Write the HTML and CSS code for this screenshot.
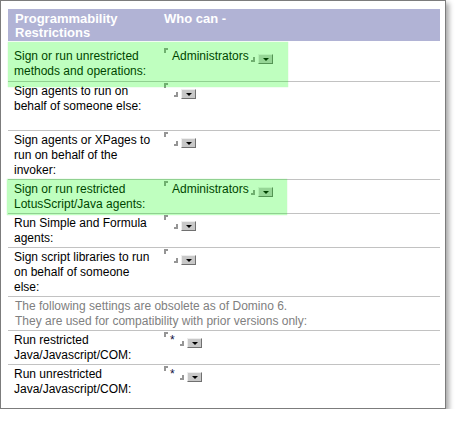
FILE: index.html
```html
<!DOCTYPE html>
<html lang="en">
<head>
    <meta charset="UTF-8">
    <title>Programmability Restrictions</title>
    <link rel="stylesheet" href="styles.css">
</head>
<body>
    <div class="panel">
        <!-- Cabeçalho -->
        <div class="row head">
            <div class="label">Programmability<br>Restrictions</div>
            <div class="value">Who can -</div>
        </div>

        <div class="row first">
            <div class="label">Sign or run unrestricted methods and operations:</div>
            <div class="value"><span class="field"><span class="fld-open"></span><span class="fld-text">Administrators</span><span class="fld-close"></span><span class="drop"></span></span></div>
        </div>

        <div class="row tall">
            <div class="label">Sign agents to run on behalf of someone else:</div>
            <div class="value"><span class="field"><span class="fld-open"></span><span class="fld-text"></span><span class="fld-close"></span><span class="drop"></span></span></div>
        </div>

        <div class="row">
            <div class="label">Sign agents or XPages to run on behalf of the invoker:</div>
            <div class="value"><span class="field"><span class="fld-open"></span><span class="fld-text"></span><span class="fld-close"></span><span class="drop"></span></span></div>
        </div>

        <div class="row">
            <div class="label">Sign or run restricted LotusScript/Java agents:</div>
            <div class="value"><span class="field"><span class="fld-open"></span><span class="fld-text">Administrators</span><span class="fld-close"></span><span class="drop"></span></span></div>
        </div>

        <div class="row">
            <div class="label">Run Simple and Formula agents:</div>
            <div class="value"><span class="field"><span class="fld-open"></span><span class="fld-text"></span><span class="fld-close"></span><span class="drop"></span></span></div>
        </div>

        <div class="row">
            <div class="label">Sign script libraries to run on behalf of someone else:</div>
            <div class="value"><span class="field"><span class="fld-open"></span><span class="fld-text"></span><span class="fld-close"></span><span class="drop"></span></span></div>
        </div>

        <div class="row note">
            The following settings are obsolete as of Domino 6.<br>
            They are used for compatibility with prior versions only:
        </div>

        <div class="row">
            <div class="label">Run restricted Java/Javascript/COM:</div>
            <div class="value"><span class="field"><span class="fld-open"></span><span class="fld-text star">*</span><span class="fld-close"></span><span class="drop"></span></span></div>
        </div>

        <div class="row last">
            <div class="label">Run unrestricted Java/Javascript/COM:</div>
            <div class="value"><span class="field"><span class="fld-open"></span><span class="fld-text star">*</span><span class="fld-close"></span><span class="drop"></span></span></div>
        </div>

        <!-- Destaques verdes -->
        <div class="mark mark-1"></div>
        <div class="mark mark-2"></div>
    </div>
</body>
</html>
```

FILE: styles.css
```css
/* Reset */
* {
    margin: 0;
    padding: 0;
    box-sizing: border-box;
}

body {
    background: #fff;
    color: #000;
    font-family: 'Liberation Sans', Arial, sans-serif;
    font-size: 12px;
}

/* Painel */
.panel {
    position: relative;
    width: 446px;
    padding: 8px 5px 10px 7px;
    border: 1px solid #7c7c7c;
    box-shadow: 3px 3px 5px rgba(0, 0, 0, 0.35);
    background: #fff;
}

.row {
    display: grid;
    grid-template-columns: 156px 1fr;
    padding: 2px 0 1px;
    line-height: 15px;
    border-bottom: 1px solid #c2c2c2;
}

.row .label {
    padding: 0 10px 0 6px;
}

.head {
    background: #b1b3d5;
    color: #fff;
    font-weight: bold;
    font-size: 13px;
    line-height: 14px;
    padding: 3px 0 1px;
    border-bottom: none;
}

.head .label {
    padding-left: 7px;
}

.first {
    padding-top: 8px;
    padding-bottom: 2px;
}

.tall {
    min-height: 49px;
}

.last {
    border-bottom: none;
}

.note {
    display: block;
    padding-left: 7px;
    color: #808080;
}

/* Campo com lista */
.field {
    display: flex;
    align-items: flex-start;
    height: 15px;
}

.fld-open {
    width: 4px;
    height: 5px;
    margin-top: -1px;
    border-top: 2px solid #959595;
    border-left: 2px solid #959595;
}

.fld-text {
    margin-left: 4px;
    min-width: 0;
}

.fld-text.star {
    margin-left: 2px;
    width: 8px;
    color: #101040;
}

.fld-close {
    width: 4px;
    height: 5px;
    margin: 8px 0 0 2px;
    border-right: 2px solid #959595;
    border-bottom: 2px solid #959595;
}

.drop {
    position: relative;
    width: 15px;
    height: 10px;
    margin: 5px 0 0 3px;
    background: #c8c8c8;
    border: 1px solid;
    border-color: #eeeeee #707070 #707070 #eeeeee;
}

.drop::after {
    content: "";
    position: absolute;
    left: 4px;
    top: 3px;
    border-left: 3px solid transparent;
    border-right: 3px solid transparent;
    border-top: 3px solid #000;
}

/* Destaques */
.mark {
    position: absolute;
    background: rgba(0, 255, 0, 0.25);
    box-shadow: 0 0 1px rgba(0, 200, 0, 0.3);
}

.mark-1 {
    left: 7px;
    top: 41px;
    width: 280px;
    height: 45px;
}

.mark-2 {
    left: 6px;
    top: 178px;
    width: 280px;
    height: 36px;
}
```
